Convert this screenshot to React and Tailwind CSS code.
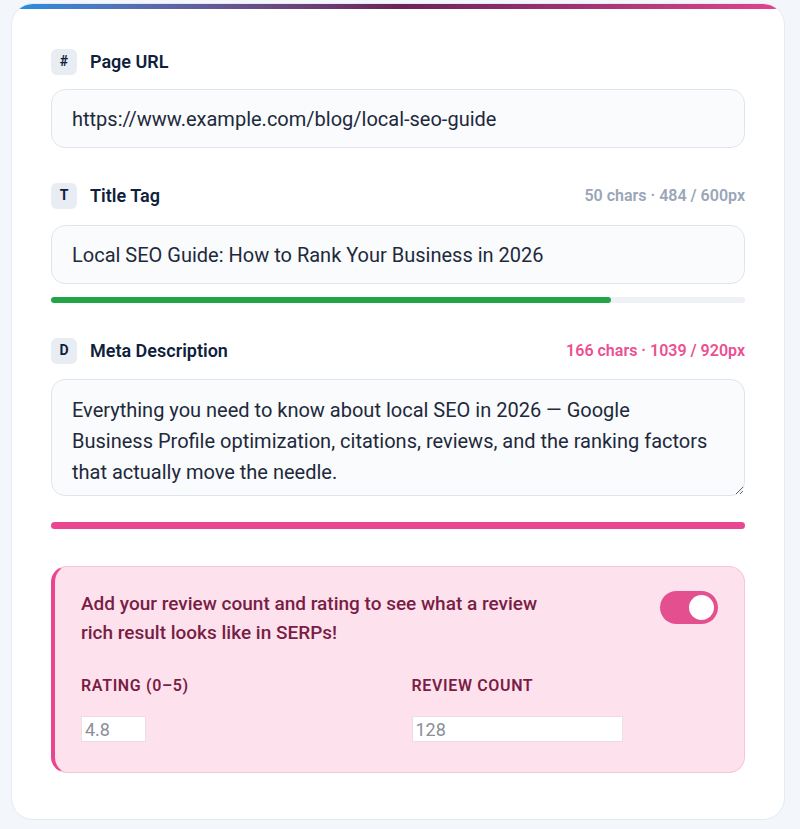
import React, { useState } from 'react';

const Badge = ({ children }) => (
  <span className="flex h-[26px] w-[26px] items-center justify-center rounded-md bg-[#e8ecf3] text-[14px] font-bold text-[#0f1f3d]">
    {children}
  </span>
);

const FieldLabel = ({ badge, label, meta, metaClass }) => (
  <div className="flex items-center justify-between">
    <div className="flex items-center gap-[13px]">
      <Badge>{badge}</Badge>
      <span className="text-[18px] font-semibold text-[#0f1f3d]">{label}</span>
    </div>
    {meta && <span className={`text-[16px] font-semibold ${metaClass}`}>{meta}</span>}
  </div>
);

export default function App() {
  const [url, setUrl] = useState('https://www.example.com/blog/local-seo-guide');
  const [title, setTitle] = useState('Local SEO Guide: How to Rank Your Business in 2026');
  const [desc, setDesc] = useState(
    'Everything you need to know about local SEO in 2026 — Google Business Profile optimization, citations, reviews, and the ranking factors that actually move the needle.'
  );
  const [reviews, setReviews] = useState(true);

  const titleWidth = 484 / 600;

  return (
    <div className="min-h-screen bg-[#f3f6fa] pt-[3px] pl-[11px] pr-[15px] pb-[11px] font-['Roboto',sans-serif]">
      <div className="overflow-hidden rounded-[22px] border border-[#e6ebf2] bg-white">
        <div className="h-[5px] bg-gradient-to-r from-[#1f8ee0] via-[#6b2358] to-[#e2448f]" />
        <div className="flex flex-col px-[39px] pt-[39px] pb-[46px]">
          <FieldLabel badge="#" label="Page URL" />
          <input
            value={url}
            onChange={(e) => setUrl(e.target.value)}
            className="mt-[14px] h-[59px] w-full rounded-[14px] border border-[#dfe4ee] bg-[#f9fbfd] px-5 text-[20px] text-[#1e293b] outline-none"
          />

          <div className="mt-[34px]">
            <FieldLabel badge="T" label="Title Tag" meta="50 chars · 484 / 600px" metaClass="text-[#9aa5b8]" />
          </div>
          <input
            value={title}
            onChange={(e) => setTitle(e.target.value)}
            className="mt-[16px] h-[59px] w-full rounded-[14px] border border-[#dfe4ee] bg-[#f9fbfd] px-5 text-[20px] text-[#1e293b] outline-none"
          />
          <div className="mt-[13px] h-[6px] w-full rounded-full bg-[#eef1f5]">
            <div className="h-full rounded-full bg-[#22a547]" style={{ width: `${titleWidth * 100}%` }} />
          </div>

          <div className="mt-[34px]">
            <FieldLabel badge="D" label="Meta Description" meta="166 chars · 1039 / 920px" metaClass="text-[#ec4f92]" />
          </div>
          <textarea
            value={desc}
            onChange={(e) => setDesc(e.target.value)}
            rows={3}
            className="mt-[15px] h-[117px] w-full rounded-[14px] border border-[#dfe4ee] bg-[#f9fbfd] pl-5 pr-[30px] pt-[15px] text-[20px] leading-[31px] text-[#1e293b] outline-none"
          />
          <div className="mt-[26px] h-[7px] w-full rounded-full bg-[#ea4793]" />

          <div className="mt-[37px] rounded-[16px] border border-l-4 border-[#f7c4da] border-l-[#e8478f] bg-[#fde2ee] pt-[22px] pr-[26px] pb-[30px] pl-[26px]">
            <div className="flex items-start justify-between">
              <p className="max-w-[475px] text-[19px] font-medium leading-[29px] text-[#7a1d45]">
                Add your review count and rating to see what a review rich result looks like in SERPs!
              </p>
              <button
                onClick={() => setReviews(!reviews)}
                className={`mt-[2px] flex h-[33px] w-[58px] items-center rounded-full p-[4px] ${
                  reviews ? 'justify-end bg-[#e4508f]' : 'justify-start bg-[#d7c1cb]'
                }`}
              >
                <span className="h-[25px] w-[25px] rounded-full bg-white" />
              </button>
            </div>
            <div className="mt-[27px] grid grid-cols-2 gap-x-6">
              <div className="flex flex-col">
                <span className="text-[16px] font-semibold tracking-[0.04em] text-[#7a1d45]">RATING (0–5)</span>
                <input
                  defaultValue="4.8"
                  className="mt-[18px] h-[26px] w-[65px] border border-[#eadde3] bg-white px-[3px] text-[18px] text-[#8a8f99] outline-none"
                />
              </div>
              <div className="flex flex-col">
                <span className="text-[16px] font-semibold tracking-[0.04em] text-[#7a1d45]">REVIEW COUNT</span>
                <input
                  defaultValue="128"
                  className="mt-[18px] h-[26px] w-[211px] border border-[#eadde3] bg-white px-[3px] text-[18px] text-[#8a8f99] outline-none"
                />
              </div>
            </div>
          </div>
        </div>
      </div>
    </div>
  );
}
